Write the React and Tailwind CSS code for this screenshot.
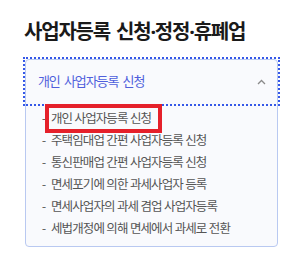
import { useState } from 'react'

const items = [
  '개인 사업자등록 신청',
  '주택임대업 간편 사업자등록 신청',
  '통신판매업 간편 사업자등록 신청',
  '면세포기에 의한 과세사업자 등록',
  '면세사업자의 과세 겸업 사업자등록',
  '세법개정에 의해 면세에서 과세로 전환',
]

export default function App() {
  const [open, setOpen] = useState(true)

  return (
    <div className="w-[303px] h-[257px] bg-white overflow-hidden font-['Noto_Sans','Noto_Sans_CJK_KR',sans-serif]">
      <div className="pl-[24px] pt-[18px]">
        <h1 className="text-[20px] leading-[28px] font-bold text-[#1a1a1a] tracking-[-1.2px] [word-spacing:2px]">
          사업자등록 신청·정정·휴폐업
        </h1>
      </div>

      <div className="ml-[25px] mt-[13px] w-[253px] rounded-[4px] border border-[#b9c9f1] bg-[#f9fafd]">
        <button
          onClick={() => setOpen(!open)}
          className="w-full h-[43px] flex items-center justify-between pl-[12px] pr-[11px] outline-2 outline-dotted outline-[#3558e8] outline-offset-[1px]"
        >
          <span className="text-[13px] tracking-[-1.1px] [word-spacing:2px] text-[#4f5fdc]">개인 사업자등록 신청</span>
          <svg width="9" height="6" viewBox="0 0 9 6" fill="none" stroke="#8a8a8a" strokeWidth="1.3">
            <path d="M1 5 L4.5 1.5 L8 5" />
          </svg>
        </button>

        {open && (
          <ul className="pt-[5px] pb-[6px] pl-[16px]">
            {items.map((item, i) => (
              <li key={item} className="relative flex h-[22px] items-center text-[12.5px] tracking-[-0.9px] text-[#555]">
                <span className="w-[9px] shrink-0 text-[#666]">-</span>
                <span>{item}</span>
                {i === 0 && (
                  <span className="absolute left-[3px] top-[-4px] w-[117px] h-[29px] border-[4px] border-[#e5202a]" />
                )}
              </li>
            ))}
          </ul>
        )}
      </div>
    </div>
  )
}
